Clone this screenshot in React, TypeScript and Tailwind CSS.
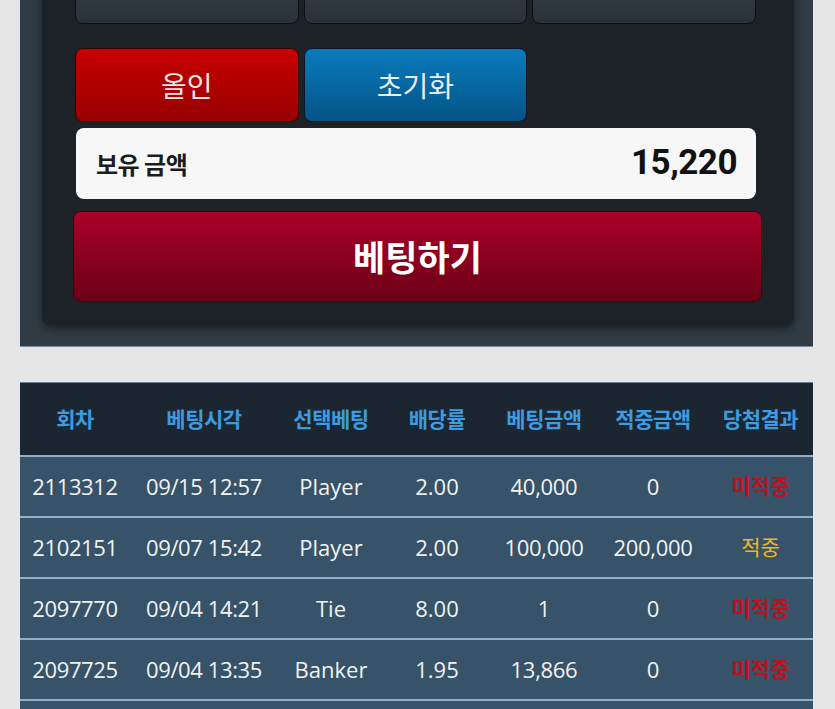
import React from "react";

type Row = {
  round: string;
  time: string;
  pick: string;
  odds: string;
  bet: string;
  win: string;
  hit: boolean;
};

const rows: Row[] = [
  { round: "2113312", time: "09/15 12:57", pick: "Player", odds: "2.00", bet: "40,000", win: "0", hit: false },
  { round: "2102151", time: "09/07 15:42", pick: "Player", odds: "2.00", bet: "100,000", win: "200,000", hit: true },
  { round: "2097770", time: "09/04 14:21", pick: "Tie", odds: "8.00", bet: "1", win: "0", hit: false },
  { round: "2097725", time: "09/04 13:35", pick: "Banker", odds: "1.95", bet: "13,866", win: "0", hit: false },
  { round: "2097701", time: "09/04 13:10", pick: "Player", odds: "2.00", bet: "10,000", win: "0", hit: false },
];

const headers = ["회차", "베팅시각", "선택베팅", "배당률", "베팅금액", "적중금액", "당첨결과"];
const chips = ["10,000", "100,000", "1,000,000"];

const kr = { fontFamily: '"Noto Sans CJK KR", "Noto Sans", sans-serif' };
const body = { fontFamily: '"Open Sans", "Noto Sans CJK KR", sans-serif' };

export default function App() {
  return (
    <div className="flex min-h-screen flex-col overflow-hidden bg-[#e6e6e6]" style={kr}>
      {/* Bet panel */}
      <section className="ml-[20px] mr-[22px] -mt-[60px] border-b border-[#7f8d99] bg-[#2f3c46] pb-[21px] pl-[22px] pr-[19px]">
        <div className="flex flex-col rounded-lg bg-[#1d2226] pb-[23px] pl-[33px] pr-[38px] pt-[10px] shadow-[0_4px_8px_rgba(0,0,0,0.45)]">
          <div className="grid grid-cols-3 gap-[5px]">
            {chips.map((c) => (
              <button
                key={c}
                className="flex h-[74px] items-center justify-center rounded-lg border border-[#0c0f12] bg-gradient-to-b from-[#3a4550] to-[#29323a] text-[26px] text-white"
                style={body}
              >
                {c}
              </button>
            ))}
          </div>

          <div className="mt-[24px] grid grid-cols-3 gap-[5px]">
            <button className="flex h-[74px] items-center justify-center rounded-lg border border-[#3a0000] bg-gradient-to-b from-[#c80000] to-[#980000] text-[28px] text-[#f3e6e6]">
              올인
            </button>
            <button className="flex h-[74px] items-center justify-center rounded-lg border border-[#08182a] bg-gradient-to-b from-[#0a7bbc] to-[#045487] text-[28px] text-[#e6f0f8]">
              초기화
            </button>
          </div>

          <div className="ml-[1px] mt-[6px] flex h-[71px] items-center justify-between rounded-lg bg-[#f7f7f8] pl-[20px] pr-[19px]">
            <span className="text-[24px] font-bold tracking-[-0.5px] text-[#1c1c1c]">보유 금액</span>
            <span
              className="text-[35px] font-bold tracking-[-0.5px] text-[#111]"
              style={{ fontFamily: 'Roboto, "Noto Sans", sans-serif' }}
            >
              15,220
            </span>
          </div>

          <button className="-ml-[2px] -mr-[6px] mt-[12px] flex h-[91px] items-center justify-center rounded-lg border border-[#4a0010] bg-gradient-to-b from-[#ab002a] to-[#6c0014] text-[35px] font-bold text-white">
            베팅하기
          </button>
        </div>
      </section>

      {/* History table */}
      <div className="ml-[20px] mr-[22px] mt-[35px]">
        <table className="w-full table-fixed border-collapse">
          <colgroup>
            <col className="w-[110px]" />
            <col className="w-[148px]" />
            <col className="w-[106px]" />
            <col className="w-[106px]" />
            <col className="w-[108px]" />
            <col className="w-[110px]" />
            <col className="w-[105px]" />
          </colgroup>
          <thead>
            <tr className="h-[73px] border-t border-b-2 border-t-[#6f7f8b] border-b-[#8fb0c8] bg-[#1b2630]">
              {headers.map((h) => (
                <th key={h} className="text-center text-[21px] font-bold tracking-[-0.5px] text-[#3d9be0]">
                  {h}
                </th>
              ))}
            </tr>
          </thead>
          <tbody style={body}>
            {rows.map((r) => (
              <tr key={r.round} className="h-[61px] border-b-2 border-[#8fb0c8] bg-[#36536a] text-[22px] text-[#f2f2f2]">
                <td className="whitespace-nowrap text-center tracking-[-0.4px]">{r.round}</td>
                <td className="whitespace-nowrap text-center tracking-[-0.4px]">{r.time}</td>
                <td className="text-center">{r.pick}</td>
                <td className="text-center">{r.odds}</td>
                <td className="whitespace-nowrap text-center tracking-[-0.3px]">{r.bet}</td>
                <td className="whitespace-nowrap text-center tracking-[-0.3px]">{r.win}</td>
                <td
                  className={`text-center text-[21px] ${r.hit ? "text-[#f0b429]" : "font-bold text-[#c0101c]"}`}
                  style={kr}
                >
                  {r.hit ? "적중" : "미적중"}
                </td>
              </tr>
            ))}
          </tbody>
        </table>
      </div>
    </div>
  );
}
